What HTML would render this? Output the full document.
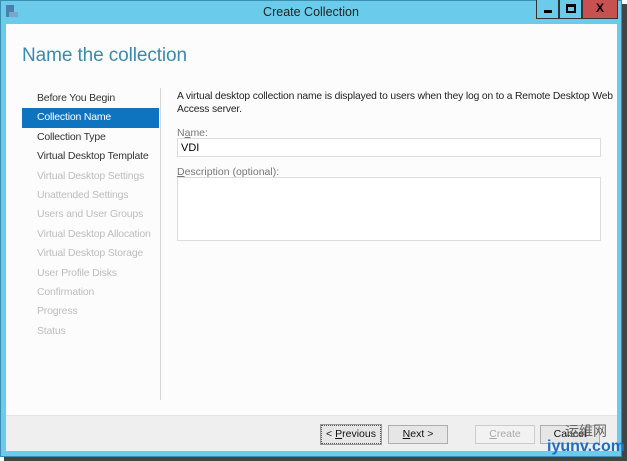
<!DOCTYPE html>
<html><head><meta charset="utf-8"><style>
*{margin:0;padding:0;box-sizing:border-box}
body{width:627px;height:461px;background:#fff;font-family:"Liberation Sans",sans-serif;position:relative;overflow:hidden}
.win{position:absolute;left:0;top:0;width:622px;height:457px;background:#6bcbea;border:1px solid #3a8fb0}
.shadow{position:absolute;left:4px;top:457px;width:623px;height:4px;background:#444}
.shadowr{position:absolute;left:622px;top:4px;width:5px;height:457px;background:#444}
.title{position:absolute;left:0;top:5px;width:622px;text-align:center;font-size:12.5px;color:#222}
.content{position:absolute;left:6px;top:24px;width:611px;height:391px;background:#fcfcfc}
.footer{position:absolute;left:6px;top:415px;width:611px;height:36px;background:#efefef;border-top:1px solid #e4e4e4}
h1{position:absolute;left:22px;top:45px;font-weight:normal;font-size:19px;color:#3a8ab0;letter-spacing:-0.1px}
.nav{position:absolute;left:22px;top:89px;width:137px}
.nav div{height:19.4px;line-height:19.4px;padding-left:15px;font-size:10.5px;color:#333;white-space:nowrap;letter-spacing:-0.2px}
.nav .sel{background:#0f74c0;color:#fff}
.nav .dis{color:#bdbdbd}
.vline{position:absolute;left:160px;top:88px;width:1px;height:312px;background:#d4d4d4}
.txt{position:absolute;left:177px;top:90px;font-size:10.3px;color:#222;line-height:13px;width:440px;letter-spacing:-0.15px}
.lbl{position:absolute;left:177px;font-size:10.5px;color:#777}
.box{position:absolute;left:177px;width:424px;background:#fff;border:1px solid #dcdcdc;font-size:11px;color:#000;padding:3px 3px}
.btn{position:absolute;top:425px;width:60px;height:19px;border:1px solid #adadad;background:#e6e6e6;font-size:10.5px;text-align:center;line-height:17px;color:#111}
.ctl{position:absolute;top:0;height:19px;border:1px solid #333;border-top:none}
</style></head><body>
<div class="win"></div>
<div class="shadow"></div><div class="shadowr"></div>
<div style="position:absolute;left:6px;top:5px;width:8px;height:12px;background:#4a7fb0"></div>
<div style="position:absolute;left:9px;top:12px;width:9px;height:5px;background:#7aa6c8"></div>
<div class="title">Create Collection</div>
<div class="ctl" style="left:536px;width:23px;background:#6bcbea"><div style="position:absolute;left:7px;top:10px;width:8px;height:3px;background:#000"></div></div>
<div class="ctl" style="left:559px;width:23px;background:#6bcbea"><div style="position:absolute;left:6px;top:4px;width:10px;height:9px;border:2px solid #000;border-top-width:3px"></div></div>
<div class="ctl" style="left:582px;width:36px;background:#c75050;color:#000;font-weight:bold;font-size:12px;text-align:center;line-height:17px">X</div>
<div class="content"></div>
<div class="footer"></div>
<h1>Name the collection</h1>
<div class="nav">
<div>Before You Begin</div>
<div class="sel">Collection Name</div>
<div>Collection Type</div>
<div>Virtual Desktop Template</div>
<div class="dis">Virtual Desktop Settings</div>
<div class="dis">Unattended Settings</div>
<div class="dis">Users and User Groups</div>
<div class="dis">Virtual Desktop Allocation</div>
<div class="dis">Virtual Desktop Storage</div>
<div class="dis">User Profile Disks</div>
<div class="dis">Confirmation</div>
<div class="dis">Progress</div>
<div class="dis">Status</div>
</div>
<div class="vline"></div>
<div class="txt">A virtual desktop collection name is displayed to users when they log on to a Remote Desktop Web<br>Access server.</div>
<div class="lbl" style="top:127px">N<u>a</u>me:</div>
<div class="box" style="top:138px;height:19px;line-height:12px">VDI</div>
<div class="lbl" style="top:166px"><u>D</u>escription (optional):</div>
<div class="box" style="top:177px;height:64px"></div>
<div class="btn" style="left:321px;border:1px dotted #555;outline:1px solid #999">&lt; <u>P</u>revious</div>
<div class="btn" style="left:388px"><u>N</u>ext &gt;</div>
<div class="btn" style="left:475px;color:#aaa;background:#f2f2f2;border-color:#ccc"><u>C</u>reate</div>
<div class="btn" style="left:540px">Cancel</div>
<div style="position:absolute;left:565px;top:421px;font-size:14px;color:#666;font-family:'Noto Sans CJK SC',sans-serif">运维网</div>
<div style="position:absolute;left:547px;top:438px;font-size:16px;font-weight:bold;color:#1a6fc0">iyunv.com</div>
</body></html>
